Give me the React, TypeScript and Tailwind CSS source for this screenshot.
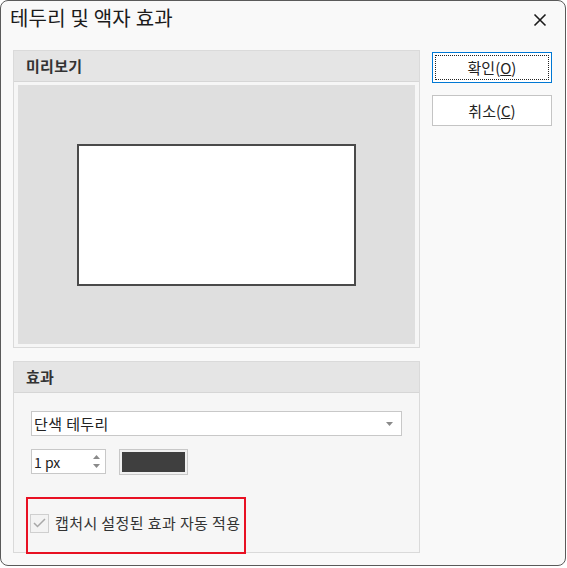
export default function App() {
  const font = { fontFamily: '"Noto Sans CJK KR", "Noto Sans", sans-serif' };

  return (
    <div className="w-[567px] h-[568px] bg-white" style={font}>
      <div className="w-[566px] h-[566px] rounded-[8px] border border-[#5a5a5a] bg-[#f9f9f9] flex flex-col overflow-hidden">
        {/* Title bar */}
        <div className="h-[49px] flex items-start justify-between pl-[9px] pr-[18px] pt-[4px]">
          <span className="text-[20px] tracking-[0.2px] text-[#1b1b1b] leading-[26px]">테두리 및 액자 효과</span>
          <svg width="14" height="14" viewBox="0 0 14 14" className="mt-[8px]">
            <path d="M1.5 1.5 L12.5 12.5 M12.5 1.5 L1.5 12.5" stroke="#1b1b1b" strokeWidth="1.6" />
          </svg>
        </div>

        <div className="flex pl-[12px] gap-[12px]">
          {/* Left column */}
          <div className="w-[407px] flex flex-col gap-[13px]">
            {/* Preview group */}
            <div className="border border-[#dadada] bg-[#f6f6f6]">
              <div className="h-[31px] bg-[#e5e5e5] border-b border-[#d6d6d6] flex items-center pl-[12px]">
                <span className="text-[15px] font-semibold tracking-[0.3px] text-[#333]">미리보기</span>
              </div>
              <div className="px-[4px] py-[3px]">
                <div className="h-[259px] bg-[#dfdfdf] flex items-center justify-center">
                  <div className="w-[279px] h-[142px] bg-white border-2 border-[#4a4a4a]" />
                </div>
              </div>
            </div>

            {/* Effect group */}
            <div className="relative h-[192px] border border-[#dadada] bg-[#f6f6f6] flex flex-col">
              <div className="h-[31px] bg-[#e5e5e5] border-b border-[#d6d6d6] flex items-center pl-[12px]">
                <span className="text-[15px] font-semibold tracking-[0.3px] text-[#333]">효과</span>
              </div>
              <div className="pl-[17px] pr-[17px] pt-[18px] flex flex-col">
                <div className="h-[25px] bg-white border border-[#c8c8c8] flex items-center justify-between pl-[2px] pr-[8px]">
                  <span className="text-[15px] tracking-[0.4px] text-[#222] leading-[20px]">단색 테두리</span>
                  <svg width="7" height="4" viewBox="0 0 7 4">
                    <path d="M0 0 L7 0 L3.5 4 Z" fill="#8a8a8a" />
                  </svg>
                </div>
                <div className="flex gap-[13px] mt-[13px]">
                  <div className="w-[75px] h-[25px] bg-white border border-[#c8c8c8] flex items-center justify-between pl-[2px] pr-[5px]">
                    <span className="text-[14px] text-[#222] leading-[20px]">1 px</span>
                    <div className="flex flex-col gap-[5px]">
                      <svg width="7" height="4" viewBox="0 0 7 4">
                        <path d="M0 4 L7 4 L3.5 0 Z" fill="#8a8a8a" />
                      </svg>
                      <svg width="7" height="4" viewBox="0 0 7 4">
                        <path d="M0 0 L7 0 L3.5 4 Z" fill="#8a8a8a" />
                      </svg>
                    </div>
                  </div>
                  <div className="w-[69px] h-[26px] border border-[#c8c8c8] bg-[#f0f0f0] p-[2px]">
                    <div className="w-full h-full bg-[#3f3f3f]" />
                  </div>
                </div>
                <div className="flex items-center gap-[6px] mt-[38px] -ml-[1px]">
                  <div className="w-[19px] h-[19px] border border-[#cfcfcf] bg-[#f3f3f3] flex items-center justify-center">
                    <svg width="13" height="10" viewBox="0 0 13 10">
                      <path d="M1 5 L4.5 8.5 L12 1" stroke="#a8a8a8" strokeWidth="1.5" fill="none" />
                    </svg>
                  </div>
                  <span className="text-[15px] tracking-[0.4px] text-[#333] leading-[20px]">캡처시 설정된 효과 자동 적용</span>
                </div>
              </div>
              <div className="absolute left-[12px] top-[135px] w-[220px] h-[57px] border-2 border-[#e81123]" />
            </div>
          </div>

          {/* Buttons */}
          <div className="w-[120px] flex flex-col gap-[12px] pt-[2px]">
            <div className="h-[31px] bg-white border border-[#0078d4] p-[2px]">
              <div className="h-full border border-dotted border-[#222] flex items-center justify-center">
                <span className="text-[15px] text-[#222] leading-[20px]">확인(<span className="underline">O</span>)</span>
              </div>
            </div>
            <div className="h-[31px] bg-white border border-[#c4c4c4] flex items-center justify-center">
              <span className="text-[15px] text-[#222] leading-[20px]">취소(<span className="underline">C</span>)</span>
            </div>
          </div>
        </div>
      </div>
    </div>
  );
}
